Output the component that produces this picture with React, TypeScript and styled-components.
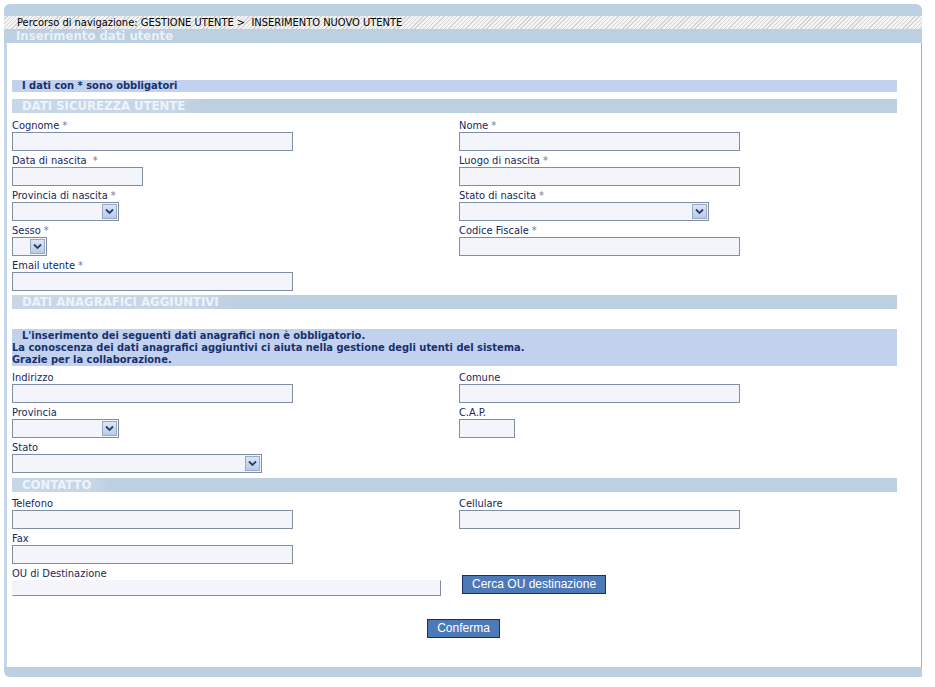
import styled, { createGlobalStyle } from "styled-components";

const GlobalStyle = createGlobalStyle`
  html, body {
    margin: 0;
    padding: 0;
    background: #ffffff;
  }
  body {
    font-family: "DejaVu Sans Condensed", "DejaVu Sans", sans-serif;
    font-size: 11px;
    color: #1c2f6b;
  }
`;

const Frame = styled.div`
  width: 918px;
  margin: 4px 0 0 4px;
  display: flex;
  flex-direction: column;
`;

const TopBand = styled.div`
  height: 12px;
  background: #bcd0e2;
  border-radius: 6px 6px 0 0;
`;

const Breadcrumb = styled.div`
  height: 13px;
  line-height: 13px;
  padding-left: 13px;
  font-size: 11px;
  color: #000;
  background: repeating-linear-gradient(
    135deg,
    #f4f4f4 0px,
    #f4f4f4 2px,
    #d4d4d4 2px,
    #d4d4d4 3px
  );
`;

const TitleBand = styled.div`
  height: 14px;
  line-height: 14px;
  padding-left: 12px;
  background: #bcd0e2;
  color: #e9f0f8;
  font-weight: bold;
  font-size: 13px;
`;

const Body = styled.div`
  border-left: 3px solid #c6d6ea;
  border-right: 1px solid #a9b2bc;
  padding: 37px 24px 29px 5px;
  display: flex;
  flex-direction: column;
`;

const BottomBand = styled.div`
  height: 10px;
  background: #bcd0e2;
  border-radius: 0 0 0 6px;
`;

const Notice = styled.div<{ $lines?: boolean; $top?: number }>`
  margin-top: ${(p) => p.$top ?? 0}px;
  background: #c2d1ed;
  font-weight: bold;
  color: #17306e;
  line-height: 12px;
  padding: ${(p) => (p.$lines ? "1px 0 0 0" : "0 0 0 10px")};
  min-height: 12px;
`;

const Indent = styled.span`
  padding-left: 10px;
`;

const SectionBar = styled.div<{ $top: number }>`
  margin-top: ${(p) => p.$top}px;
  height: 14px;
  background: #bcd0e2;
  display: flex;
`;

const SectionTitle = styled.div`
  padding: 0 18px 0 10px;
  line-height: 14px;
  font-size: 13px;
  font-weight: bold;
  color: #eef3f9;
  background: linear-gradient(90deg, #c7d7e8 80%, #bcd0e2 100%);
`;

const FormGrid = styled.div<{ $top: number }>`
  margin-top: ${(p) => p.$top}px;
  display: grid;
  grid-template-columns: 447px 1fr;
`;

const Cell = styled.div`
  display: flex;
  flex-direction: column;
  align-items: flex-start;
  margin-bottom: 2px;
`;

const Label = styled.label`
  box-sizing: border-box;
  height: 14px;
  padding-top: 2px;
  line-height: 12px;
  color: #14285e;
`;

const Star = styled.span`
  color: #6c7c9e;
  margin-left: 3px;
`;

const TextInput = styled.input<{ $w: number }>`
  box-sizing: border-box;
  width: ${(p) => p.$w}px;
  height: 19px;
  margin: 0;
  border: 1px solid #7f8ea3;
  background: #f3f5fb;
`;

const SelectBox = styled.div<{ $w: number }>`
  box-sizing: border-box;
  width: ${(p) => p.$w}px;
  height: 19px;
  border: 1px solid #7f8ea3;
  background: #f3f5fb;
  display: flex;
  justify-content: flex-end;
  align-items: center;
  padding-right: 1px;
`;

const Arrow = styled.div`
  box-sizing: border-box;
  width: 15px;
  height: 15px;
  border: 1px solid #98abc6;
  background: linear-gradient(#dbe6f5, #b8cbe6);
  display: flex;
  align-items: center;
  justify-content: center;
`;

const OuInput = styled.input`
  box-sizing: border-box;
  width: 429px;
  height: 16px;
  margin: 0;
  border: 1px solid #7f8ea3;
  border-top-color: #f3f5fb;
  border-left-color: #f3f5fb;
  background: #f3f5fb;
`;

const ButtonCell = styled.div`
  padding: 9px 0 0 3px;
`;

const Button = styled.button`
  height: 19px;
  padding: 0 9px;
  border: 1px solid #17306b;
  background: #4d79b8;
  color: #ffffff;
  font-family: "Liberation Sans", Arial, sans-serif;
  font-size: 12px;
  line-height: 17px;
  cursor: pointer;
`;

const SubmitRow = styled.div`
  display: flex;
  justify-content: center;
  margin: 21px 0 0 18px;
`;

const Select = ({ w }: { w: number }) => (
  <SelectBox $w={w}>
    <Arrow>
      <svg width="9" height="7" viewBox="0 0 9 7">
        <path d="M1 1.5 L4.5 5 L8 1.5" fill="none" stroke="#2b3f6a" strokeWidth="1.8" />
      </svg>
    </Arrow>
  </SelectBox>
);

const Field = ({
  label,
  req,
  children,
}: {
  label: string;
  req?: boolean;
  children: React.ReactNode;
}) => (
  <Cell>
    <Label>
      {label}
      {req && <Star>*</Star>}
    </Label>
    {children}
  </Cell>
);

const App = () => {
  return (
    <>
      <GlobalStyle />
      <Frame>
        <TopBand />
        <Breadcrumb>
          Percorso di navigazione: GESTIONE UTENTE &gt;&nbsp; INSERIMENTO NUOVO UTENTE
        </Breadcrumb>
        <TitleBand>Inserimento dati utente</TitleBand>
        <Body>
          <Notice>I dati con * sono obbligatori</Notice>

          <SectionBar $top={7}>
            <SectionTitle>DATI SICUREZZA UTENTE</SectionTitle>
          </SectionBar>
          <FormGrid $top={5}>
            <Field label="Cognome" req>
              <TextInput $w={281} />
            </Field>
            <Field label="Nome" req>
              <TextInput $w={281} />
            </Field>
            <Field label="Data di nascita " req>
              <TextInput $w={131} />
            </Field>
            <Field label="Luogo di nascita" req>
              <TextInput $w={281} />
            </Field>
            <Field label="Provincia di nascita" req>
              <Select w={107} />
            </Field>
            <Field label="Stato di nascita" req>
              <Select w={250} />
            </Field>
            <Field label="Sesso" req>
              <Select w={35} />
            </Field>
            <Field label="Codice Fiscale" req>
              <TextInput $w={281} />
            </Field>
            <Field label="Email utente" req>
              <TextInput $w={281} />
            </Field>
          </FormGrid>

          <SectionBar $top={2}>
            <SectionTitle>DATI ANAGRAFICI AGGIUNTIVI</SectionTitle>
          </SectionBar>
          <Notice $lines $top={20}>
            <Indent>L'inserimento dei seguenti dati anagrafici non è obbligatorio.</Indent>
            <br />
            La conoscenza dei dati anagrafici aggiuntivi ci aiuta nella gestione degli utenti del sistema.
            <br />
            Grazie per la collaborazione.
          </Notice>
          <FormGrid $top={4}>
            <Field label="Indirizzo">
              <TextInput $w={281} />
            </Field>
            <Field label="Comune">
              <TextInput $w={281} />
            </Field>
            <Field label="Provincia">
              <Select w={107} />
            </Field>
            <Field label="C.A.P.">
              <TextInput $w={56} />
            </Field>
            <Field label="Stato">
              <Select w={250} />
            </Field>
          </FormGrid>

          <SectionBar $top={3}>
            <SectionTitle>CONTATTO</SectionTitle>
          </SectionBar>
          <FormGrid $top={4}>
            <Field label="Telefono">
              <TextInput $w={281} />
            </Field>
            <Field label="Cellulare">
              <TextInput $w={281} />
            </Field>
            <Field label="Fax">
              <TextInput $w={281} />
            </Field>
            <div />
            <Field label="OU di Destinazione">
              <OuInput />
            </Field>
            <ButtonCell>
              <Button>Cerca OU destinazione</Button>
            </ButtonCell>
          </FormGrid>

          <SubmitRow>
            <Button>Conferma</Button>
          </SubmitRow>
        </Body>
        <BottomBand />
      </Frame>
    </>
  );
};

export default App;
